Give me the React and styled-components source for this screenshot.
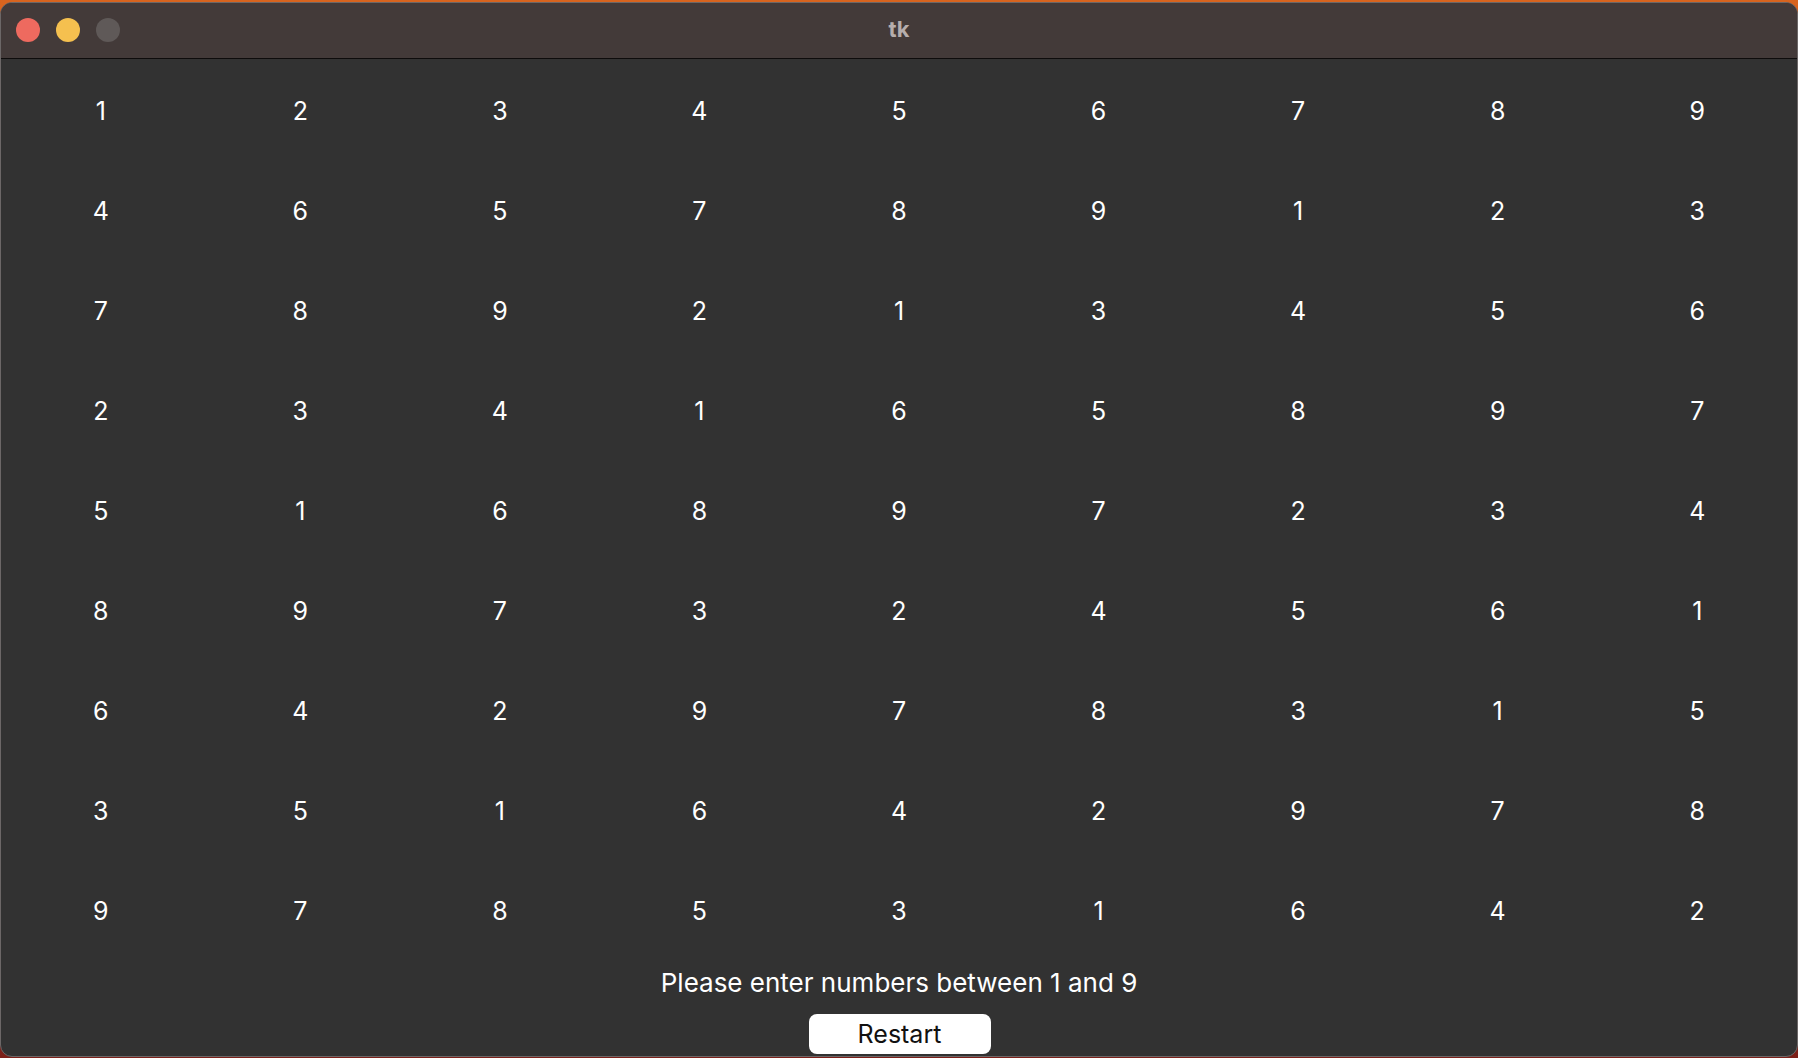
import React from 'react'
import styled, { createGlobalStyle } from 'styled-components'

const GlobalStyle = createGlobalStyle`
    html, body {
        margin: 0;
        padding: 0;
        height: 1058px;
        overflow: hidden;
    }
    body {
        background: linear-gradient(180deg, #d8641f 0%, #a8381c 60%, #7c2019 100%);
        font-family: Inter, "Noto Sans", "Liberation Sans", sans-serif;
    }
`

const Window = styled.div`
    margin-top: 2px;
    height: 1055px;
    box-sizing: border-box;
    border: 1px solid #6c6767;
    border-radius: 12px;
    background-color: #323232;
    overflow: hidden;
    display: flex;
    flex-direction: column;
`

const TitleBar = styled.div`
    position: relative;
    height: 55px;
    flex: none;
    background-color: #433a39;
    border-bottom: 1px solid #0e0c0c;
    display: flex;
    align-items: center;
    justify-content: center;
`

const Lights = styled.div`
    position: absolute;
    left: 15px;
    top: 15px;
    display: flex;
    gap: 16px;
`

const Light = styled.span`
    width: 24px;
    height: 24px;
    border-radius: 50%;
    background-color: ${p => p.$color};
`

const Title = styled.div`
    font-size: 22px;
    font-weight: 700;
    color: #b6aead;
    margin-top: -4px;
`

const Board = styled.div`
    padding-top: 2px;
    display: grid;
    grid-template-columns: repeat(9, 1fr);
    grid-auto-rows: 100px;
`

const Cell = styled.div`
    display: flex;
    align-items: center;
    justify-content: center;
    font-size: 25px;
    color: #ffffff;
`

const Message = styled.div`
    margin-top: 6px;
    line-height: 32px;
    font-size: 26px;
    color: #ffffff;
    text-align: center;
`

const Footer = styled.div`
    display: flex;
    justify-content: center;
    margin-top: 15px;
`

const Button = styled.button`
    width: 182px;
    height: 40px;
    border: none;
    border-radius: 8px;
    background-color: #ffffff;
    color: #111111;
    font-family: inherit;
    font-size: 25px;
    padding: 0;
    margin-left: 1px;
`

const board = [
    [1, 2, 3, 4, 5, 6, 7, 8, 9],
    [4, 6, 5, 7, 8, 9, 1, 2, 3],
    [7, 8, 9, 2, 1, 3, 4, 5, 6],
    [2, 3, 4, 1, 6, 5, 8, 9, 7],
    [5, 1, 6, 8, 9, 7, 2, 3, 4],
    [8, 9, 7, 3, 2, 4, 5, 6, 1],
    [6, 4, 2, 9, 7, 8, 3, 1, 5],
    [3, 5, 1, 6, 4, 2, 9, 7, 8],
    [9, 7, 8, 5, 3, 1, 6, 4, 2],
]

export default function App() {
    return (
        <>
            <GlobalStyle />
            <Window>
                <TitleBar>
                    <Lights>
                        <Light $color="#ee6a5f" />
                        <Light $color="#f5c04f" />
                        <Light $color="#5f5958" />
                    </Lights>
                    <Title>tk</Title>
                </TitleBar>
                <Board>
                    {board.map((row, r) =>
                        row.map((n, c) => <Cell key={r + '-' + c}>{n}</Cell>)
                    )}
                </Board>
                <Message>Please enter numbers between 1 and 9</Message>
                <Footer>
                    <Button>Restart</Button>
                </Footer>
            </Window>
        </>
    )
}
